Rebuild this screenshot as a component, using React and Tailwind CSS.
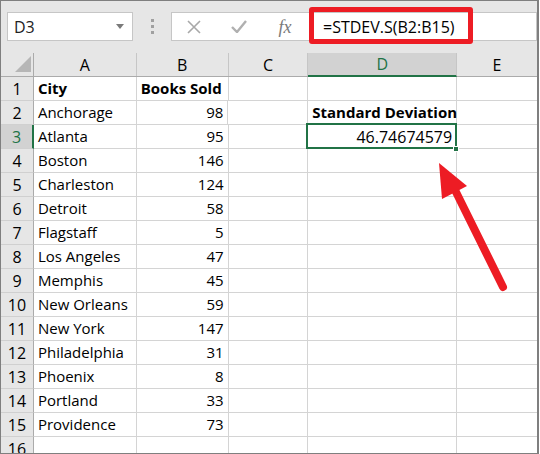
import React from 'react';

const rows = [
  ['City', 'Books Sold', true],
  ['Anchorage', 98],
  ['Atlanta', 95],
  ['Boston', 146],
  ['Charleston', 124],
  ['Detroit', 58],
  ['Flagstaff', 5],
  ['Los Angeles', 47],
  ['Memphis', 45],
  ['New Orleans', 59],
  ['New York', 147],
  ['Philadelphia', 31],
  ['Phoenix', 8],
  ['Portland', 33],
  ['Providence', 73],
  ['', ''],
];

const cols = ['A', 'B', 'C', 'D', 'E'];
const colW = ['w-[103px]', 'w-[92px]', 'w-[80px]', 'w-[149px]', 'w-[80px]'];

const Toolbar = () => (
  <div className="h-[52px] shrink-0 bg-[#e6e6e6] flex items-start pt-[11px] pl-[6px]">
    {/* Name box */}
    <div className="w-[126px] h-[29px] bg-white border border-[#c6c6c6] flex items-center justify-between pl-[6px] pr-[8px]">
      <span className="text-[16px] text-[#222]">D3</span>
      <svg width="8" height="5" viewBox="0 0 8 5"><path d="M0 0h8L4 5z" fill="#7a7a7a" /></svg>
    </div>
    {/* Separator dots */}
    <div className="w-[38px] h-[29px] flex flex-col items-center justify-center gap-[3px]">
      <span className="w-[3px] h-[3px] bg-[#a0a0a0]" />
      <span className="w-[3px] h-[3px] bg-[#a0a0a0]" />
      <span className="w-[3px] h-[3px] bg-[#a0a0a0]" />
    </div>
    {/* Formula box */}
    <div className="flex-1 h-[29px] bg-white border border-[#c6c6c6] flex items-center">
      <div className="w-[44px] flex justify-center">
        <svg width="14" height="14" viewBox="0 0 14 14"><path d="M1 1l12 12M13 1L1 13" stroke="#a8a8a8" strokeWidth="1.6" /></svg>
      </div>
      <div className="w-[46px] flex justify-center">
        <svg width="16" height="13" viewBox="0 0 16 13"><path d="M1 7l5 5L15 1" stroke="#b0b0b0" strokeWidth="2.4" fill="none" /></svg>
      </div>
      <div className="w-[46px] flex justify-center">
        <span className="text-[18px] italic text-[#7a7a7a] font-['Liberation_Serif',serif] leading-none">fx</span>
      </div>
      <span className="ml-[15px] text-[16px] text-black whitespace-nowrap">=STDEV.S(B2:B15)</span>
    </div>
  </div>
);

const App = () => (
  <div className="w-[540px] h-[454px] bg-white relative overflow-hidden font-['Open_Sans',sans-serif]">
    <div className="w-[539px] h-[454px] border border-[#7f7f7f] border-r-2 overflow-hidden flex flex-col">
      <Toolbar />

      {/* Column headers */}
      <div className="flex h-[24px] shrink-0 bg-[#e6e6e6] border-b border-[#ababab]">
        <div className="w-[33px] border-r border-[#ababab] relative">
          <svg className="absolute left-[14px] top-[3px]" width="16" height="16" viewBox="0 0 16 16"><path d="M16 0V16H0z" fill="#b6b6b6" /></svg>
        </div>
        {cols.map((c, i) => (
          <div
            key={c}
            className={`${colW[i]} flex items-center justify-center text-[16px] ${i < 4 ? 'border-r border-[#c6c6c6]' : ''} ${
              c === 'D' ? 'bg-[#d2d2d2] text-[#217346] border-b-2 border-b-[#217346] -mb-px' : 'text-black'
            }`}
          >
            {c}
          </div>
        ))}
      </div>

      {/* Rows */}
      {rows.map((r, idx) => {
        const n = idx + 1;
        const sel = n === 3;
        return (
          <div key={n} className="flex h-[24px] shrink-0">
            <div
              className={`w-[33px] flex items-center justify-center text-[16px] border-b border-[#d0d0d0] ${
                sel ? 'bg-[#d2d2d2] text-[#217346] border-r-2 border-r-[#217346]' : 'bg-[#e6e6e6] text-black border-r border-r-[#ababab]'
              }`}
            >
              {n}
            </div>
            <div className={`${colW[0]} border-r border-b border-[#d4d4d4] flex items-center px-[4px] text-[15px] text-black whitespace-nowrap ${r[2] ? 'font-bold' : ''}`}>
              {r[0]}
            </div>
            <div className={`${colW[1]} border-r border-b border-[#d4d4d4] flex items-center px-[4px] text-[15px] text-black whitespace-nowrap ${r[2] ? 'font-bold justify-start' : 'justify-end'}`}>
              {r[1]}
            </div>
            <div className={`${colW[2]} border-r border-b border-[#d4d4d4]`} />
            <div className={`${colW[3]} border-r border-b border-[#d4d4d4] flex items-center px-[4px] text-[15px] text-black whitespace-nowrap relative ${n === 2 ? 'font-bold' : 'justify-end'}`}>
              {n === 2 && 'Standard Deviation'}
              {sel && (
                <>
                  <span className="relative z-10 text-[16px]">46.74674579</span>
                  <div className="absolute -left-[2px] -top-[2px] -right-px -bottom-px border-2 border-[#217346]" />
                  <div className="absolute -right-[3px] -bottom-[4px] w-[6px] h-[6px] bg-[#217346] border border-white z-10" />
                </>
              )}
            </div>
            <div className={`${colW[4]} border-b border-[#d4d4d4]`} />
          </div>
        );
      })}
    </div>

    {/* Red highlight around formula */}
    <div className="absolute left-[309px] top-[7px] w-[164px] h-[37px] border-[5px] border-[#ed1c24] rounded-[3px]" />

    {/* Red arrow */}
    <svg className="absolute left-0 top-0 pointer-events-none" width="540" height="454" viewBox="0 0 540 454">
      <path d="M503 287L455 190" stroke="#ed1c24" strokeWidth="8" strokeLinecap="round" />
      <path d="M439 163L442 199L467 186z" fill="#ed1c24" />
    </svg>
  </div>
);

export default App;
